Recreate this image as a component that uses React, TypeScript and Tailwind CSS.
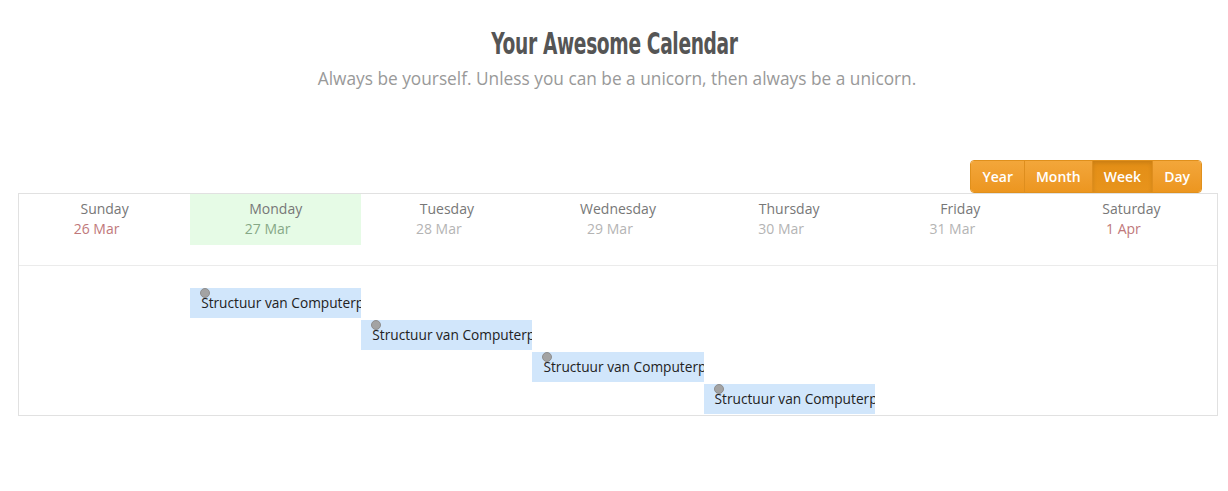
import React from "react";

const DAYS = [
  { name: "Sunday", date: "26 Mar", tone: "text-[#c0787a]" },
  { name: "Monday", date: "27 Mar", tone: "text-[#86a886]", today: true },
  { name: "Tuesday", date: "28 Mar", tone: "text-[#b4b4b4]" },
  { name: "Wednesday", date: "29 Mar", tone: "text-[#b4b4b4]" },
  { name: "Thursday", date: "30 Mar", tone: "text-[#b4b4b4]" },
  { name: "Friday", date: "31 Mar", tone: "text-[#b4b4b4]" },
  { name: "Saturday", date: "1 Apr", tone: "text-[#c0787a]" },
];

const EVENTS = [
  { title: "Structuur van Computerprogramma's", cls: "col-start-2 row-start-1" },
  { title: "Structuur van Computerprogramma's", cls: "col-start-3 row-start-2" },
  { title: "Structuur van Computerprogramma's", cls: "col-start-4 row-start-3" },
  { title: "Structuur van Computerprogramma's", cls: "col-start-5 row-start-4" },
];

const VIEWS = ["Year", "Month", "Week", "Day"];

export default function App() {
  return (
    <div className="min-h-[491px] bg-white font-['Open_Sans',sans-serif]">
      <header className="pt-[26px] text-center">
        <h1 className="inline-block scale-x-[0.69] font-['DejaVu_Sans_Condensed',sans-serif] text-[30px] font-bold leading-[36px] tracking-[-0.5px] text-[#555]">
          Your Awesome Calendar
        </h1>
        <p className="ml-[6px] mt-[5px] text-[17.3px] leading-[24px] text-[#999]">
          Always be yourself. Unless you can be a unicorn, then always be a unicorn.
        </p>
      </header>

      <div className="ml-[18px] mt-[69px] w-[1200px]">
        <div className="flex justify-end pr-[16px]">
          <div className="flex h-[33px] overflow-hidden rounded-[4px] border border-[#e0901c] text-[14px] font-semibold text-white">
            {VIEWS.map((v, i) => (
              <button
                key={v}
                className={`px-[11px] leading-[31px] ${i > 0 ? "border-l border-[#de8e1e]" : ""} ${
                  v === "Week"
                    ? "bg-gradient-to-b from-[#e38e16] to-[#e8941c] shadow-[inset_0_2px_4px_rgba(0,0,0,0.12)]"
                    : "bg-gradient-to-b from-[#f3a63a] to-[#ec961f]"
                }`}
              >
                {v}
              </button>
            ))}
          </div>
        </div>

        <div className="border border-[#e1e1e1]">
          <div className="grid grid-cols-7 border-b border-[#ebebeb] pb-[20px]">
            {DAYS.map((d) => (
              <div
                key={d.name}
                className={`h-[51px] pt-[5px] text-center text-[14px] leading-[20px] ${
                  d.today ? "bg-[#e6fbe6]" : ""
                }`}
              >
                <div className="text-[#777]">{d.name}</div>
                <div className={`pr-[16px] ${d.tone}`}>{d.date}</div>
              </div>
            ))}
          </div>

          <div className="grid grid-cols-7 gap-y-[2px] pb-[1px] pt-[22px]">
            {EVENTS.map((e, i) => (
              <div
                key={i}
                className={`${e.cls} relative h-[30px] overflow-hidden whitespace-nowrap bg-[#d1e6fb] pl-[11px] pt-[5px] text-[13.7px] leading-[20px] text-[#222]`}
              >
                <span className="absolute left-[10px] top-0 h-[10px] w-[10px] rounded-full border border-[#8e8e8e] bg-[#a3a3a3]" />
                {e.title}
              </div>
            ))}
          </div>
        </div>
      </div>
    </div>
  );
}
